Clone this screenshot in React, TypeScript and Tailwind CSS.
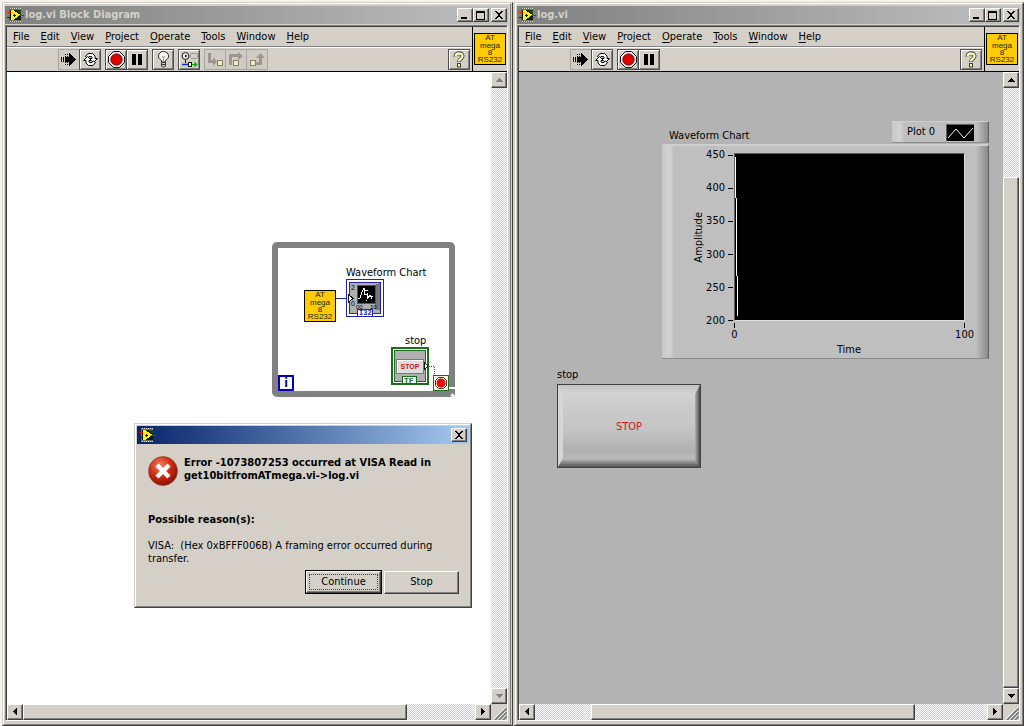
import React from "react";

const raised =
  "border border-t-white border-l-white border-r-[#404040] border-b-[#404040] shadow-[inset_-1px_-1px_0_#808080] bg-[#d4d0c8]";

function LabViewIcon() {
  return (
    <svg width="17" height="14" viewBox="0 0 17 14" shapeRendering="crispEdges" className="shrink-0">
      <rect x="2" y="0" width="12" height="14" fill="#66705c" />
      <rect x="3" y="2" width="11" height="10" fill="#0c1c08" />
      <path d="M3 .5H14M3 13.500H14" stroke="#e0e0d0" strokeDasharray="1 1" />
      <path d="M9 2H14V7Z" fill="#1c4a14" />
      <path d="M4 2H6L13 6.500V7.500L6 12H4Z" fill="#fff200" />
      <path d="M6 7H9M7.500 5.500V8.500" stroke="#202000" />
      <path d="M0 4.500H4M12 7.500H17" stroke="#f00" />
      <path d="M0 9.500H4" stroke="#00f" />
    </svg>
  );
}

function CaptionButtons() {
  const base = `h-[14px] w-4 grid place-items-center ${raised}`;
  return (
    <div className="flex items-center">
      <button type="button" aria-label="Minimize" className={base}>
        <svg width="12" height="10" shapeRendering="crispEdges"><rect x="2" y="7" width="6" height="2" /></svg>
      </button>
      <button type="button" aria-label="Maximize" className={base}>
        <svg width="12" height="10" shapeRendering="crispEdges">
          <path d="M1 1H10V10H1Z M2 3V9H9V3Z" fillRule="evenodd" />
        </svg>
      </button>
      <CloseButton className="ml-[2px]" />
    </div>
  );
}

function CloseButton({ className = "" }: { className?: string }) {
  return (
    <button type="button" aria-label="Close" className={`h-[14px] w-4 grid place-items-center ${raised} ${className}`}>
      <svg width="12" height="10" shapeRendering="crispEdges">
        <path d="M2 1h2v1h1v1h2v-1h1v-1h2v1h-1v1h-1v1h-1v2h1v1h1v1h1v1h-2v-1h-1v-1h-2v1h-1v1h-2v-1h1v-1h1v-1h1v-2h-1v-1h-1v-1h-1z" />
      </svg>
    </button>
  );
}

const menus = ["File", "Edit", "View", "Project", "Operate", "Tools", "Window", "Help"];

function MenuBar() {
  return (
    <nav className="flex h-[20px] items-center gap-[11px] border-b border-[#808080] pl-[6px]">
      {menus.map((m) => (
        <button type="button" key={m} className="leading-[14px]">
          <span className="underline underline-offset-2">{m[0]}</span>
          {m.slice(1)}
        </button>
      ))}
    </nav>
  );
}

function ToolButton({
  label,
  flat,
  children,
  className = "",
}: {
  label: string;
  flat?: boolean;
  children: React.ReactNode;
  className?: string;
}) {
  const look = flat
    ? "border border-[#a9a69f] bg-[#d0ccc4]"
    : "border border-[#505050] bg-[#d4d0c8] shadow-[inset_1px_1px_0_#fff,inset_-1px_-1px_0_#808080]";
  return (
    <button type="button" aria-label={label} className={`grid h-[21px] w-[22px] place-items-center ${look} ${className}`}>
      {children}
    </button>
  );
}

function RunIcon() {
  return (
    <svg width="16" height="13" shapeRendering="crispEdges">
      <path d="M0 4h1v5h-1zM2 4h1v5h-1zM4 4h4v5h-4zM8 0h1v1h1v1h1v1h1v1h1v1h1v1h1v1h-1v1h-1v1h-1v1h-1v1h-1v1h-1v1h-1z" />
      <path d="M4.500 1V4M6.500 1V4M4.500 9V12M6.500 9V12" stroke="#000" strokeDasharray="1 1" />
    </svg>
  );
}

function RunLoopIcon() {
  return (
    <svg width="17" height="15" viewBox="0 0 17 15">
      <path d="M3.500 4.500L6 1.500H10.500L13 4V6.500H15.500L11.500 10.500L7.500 6.500H10V5L9 4.500H7L5.500 6Z" fill="#fff" stroke="#000" />
      <path d="M13.500 10.500L11 13.500H6.500L4 11V8.500H1.500L5.500 4.500L9.500 8.500H7V10L8 10.500H10L11.500 9Z" fill="#fff" stroke="#000" />
    </svg>
  );
}

function AbortIcon() {
  return (
    <svg width="17" height="17" viewBox="0 0 17 17">
      <path d="M5.500 .5H11.500L16.500 5.500V11.500L11.500 16.500H5.500L.5 11.500V5.500Z" fill="#f4e8e4" stroke="#111" />
      <circle cx="8.500" cy="8.500" r="5.600" fill="#e60000" stroke="#600" />
    </svg>
  );
}

function PauseIcon() {
  return (
    <svg width="12" height="11" shapeRendering="crispEdges">
      <path d="M1 0h4v11h-4zM7 0h4v11h-4z" />
    </svg>
  );
}

function BulbIcon() {
  return (
    <svg width="13" height="17" viewBox="0 0 13 17">
      <path d="M4.500 11V9.500C2 8 1.500 6.500 1.500 5A5 4.500 0 0 1 11.500 5C11.500 6.500 11 8 8.500 9.500V11Z" fill="#fffff0" stroke="#222" />
      <path d="M5 5L6.500 7L8 5M6.500 7V11" fill="none" stroke="#888" />
      <path d="M4.500 11.500H8.500V15L7.500 16H5.500L4.500 15Z" fill="#e4d080" stroke="#333" />
      <path d="M4.500 13.500H8.500" stroke="#333" />
    </svg>
  );
}

function RetainIcon() {
  return (
    <svg width="17" height="16" viewBox="0 0 17 16">
      <circle cx="4.500" cy="4" r="3.400" fill="#fff" stroke="#111" />
      <path d="M4 2.500V5.500L6.500 4Z" />
      <path d="M4.500 7.500V11" stroke="#111" />
      <rect x="9.500" y="1.500" width="7" height="5" rx="1" fill="#d4d0c8" stroke="#999" />
      <path d="M1 12.500H7" stroke="#1030d0" strokeWidth="1.500" />
      <rect x="7.500" y="10.500" width="3" height="4" fill="#fff" stroke="#111" />
      <path d="M11 12.500H14" stroke="#0a0" />
      <path d="M13.500 9.500V15.500L16.500 12.500Z" fill="#0a0" />
    </svg>
  );
}

function StepIcon({ kind }: { kind: "into" | "over" | "out" }) {
  const arrow = {
    into: "M1 1H4V8H6V5L10 9.500L6 14V11H1Z",
    over: "M1 13V2H10V0L15 4L10 8V5H4V13Z",
    out: "M7 13V10H10V6H7L11.500 1L16 6H13V13Z",
  }[kind];
  const x = { into: 10.5, over: 5.500, out: 1.500 }[kind];
  return (
    <svg width="17" height="15" viewBox="0 0 17 15">
      <path d={arrow} fill="#9c9890" />
      <rect x={x} y="8.500" width="5" height="5" fill="#eeecc0" stroke="#808078" />
    </svg>
  );
}

function HelpIcon() {
  return (
    <svg width="14" height="17" viewBox="0 0 14 17">
      <path d="M3.500 5.500C3 1.500 10.500 1 10.500 5C10.500 8 7 7.500 7 11" fill="none" stroke="#333" strokeWidth="4" />
      <rect x="5" y="12" width="4" height="4.500" rx="1" fill="#333" />
      <path d="M3.500 5.500C3.500 1.500 10.500 1.500 10.500 5C10.500 8 7 7.500 7 10.500" fill="none" stroke="#fdf9b8" strokeWidth="2.400" />
      <rect x="6" y="13" width="2" height="2.500" fill="#fdf9b8" />
    </svg>
  );
}

function ViIcon() {
  return (
    <div className="flex h-8 w-8 flex-col items-center justify-between overflow-hidden border border-black bg-[#ffcc00] font-['Liberation_Sans',sans-serif] text-[8px] leading-[7px] text-[#222]">
      <span className="leading-[8px]">AT</span>
      <span>mega</span>
      <span>8</span>
      <span className="leading-[8px]">RS232</span>
    </div>
  );
}

function ToolBar({ diagram }: { diagram?: boolean }) {
  return (
    <div className="flex h-[24px] items-center border-t border-white pr-[2px] pl-[51px]">
      <div className="flex flex-1 gap-1">
        <div className="flex">
          <ToolButton label="Run" flat><RunIcon /></ToolButton>
          <ToolButton label="Run continuously" className="-ml-px"><RunLoopIcon /></ToolButton>
        </div>
        <div className="flex">
          <ToolButton label="Abort"><AbortIcon /></ToolButton>
          <ToolButton label="Pause" className="-ml-px"><PauseIcon /></ToolButton>
        </div>
        {diagram && (
          <>
            <ToolButton label="Highlight execution"><BulbIcon /></ToolButton>
            <ToolButton label="Retain wire values"><RetainIcon /></ToolButton>
            <div className="flex">
              <ToolButton label="Step into" flat><StepIcon kind="into" /></ToolButton>
              <ToolButton label="Step over" flat className="-ml-px"><StepIcon kind="over" /></ToolButton>
              <ToolButton label="Step out" flat className="-ml-px"><StepIcon kind="out" /></ToolButton>
            </div>
          </>
        )}
      </div>
      <ToolButton label="Context help"><HelpIcon /></ToolButton>
    </div>
  );
}

const track =
  "bg-[repeating-conic-gradient(#ffffff_0_25%,#d4d0c8_0_50%)] bg-[length:2px_2px]";

const arrows = {
  up: "M7 5h1v1h1v1h1v1h1v1h-7v-1h1v-1h1v-1h1z",
  down: "M4 5h7v1h-1v1h-1v1h-1v1h-1v-1h-1v-1h-1v-1h-1z",
  left: "M8 3h1v7h-1v-1h-1v-1h-1v-1h-1v-1h1v-1h1v-1h1z",
  right: "M5 3h1v1h1v1h1v1h1v1h-1v1h-1v1h-1v1h-1z",
};

function ScrollArrow({ dir, disabled }: { dir: keyof typeof arrows; disabled?: boolean }) {
  return (
    <button type="button" aria-label={`Scroll ${dir}`} disabled={disabled} className={`h-4 w-4 shrink-0 ${raised}`}>
      <svg width="14" height="14" shapeRendering="crispEdges">
        <path d={arrows[dir]} fill={disabled ? "#808080" : "#000"} />
      </svg>
    </button>
  );
}

function LabWindow({
  title,
  diagram,
  canvasClass,
  vertical,
  horizontal,
  className = "",
  children,
}: {
  title: string;
  diagram?: boolean;
  canvasClass: string;
  vertical: React.ReactNode;
  horizontal: React.ReactNode;
  className?: string;
  children: React.ReactNode;
}) {
  return (
    <section className={`flex min-w-0 flex-1 flex-col border-t border-r border-b border-t-[#d4d0c8] border-l-[#d4d0c8] border-r-[#404040] border-b-[#404040] bg-[#d4d0c8] ${className}`}>
      <div className="flex min-h-0 flex-1 flex-col border border-t-white border-r-[#808080] border-b-[#808080] border-l-white pt-[2px] pr-[2px] pb-[3px] pl-px">
        <header className="flex h-[18px] shrink-0 items-center gap-px bg-linear-to-r from-[#808080] to-[#c0c0c0] pr-px pl-[2px]">
          <LabViewIcon />
          <h1 className="flex-1 text-[11px] font-bold text-[#d4d0c8]">{title}</h1>
          <CaptionButtons />
        </header>
        <div className="mt-px flex min-h-0 flex-1 flex-col border border-t-[#808080] border-r-white border-b-white border-l-[#808080]">
          <div className="flex min-h-0 flex-1 flex-col border-t border-l border-[#404040]">
            <div className="flex shrink-0 border-b border-black">
              <div className="min-w-0 flex-1">
                <MenuBar />
                <ToolBar diagram={diagram} />
              </div>
              <div className="border-l border-black pt-[6px] pr-px pl-px">
                <ViIcon />
              </div>
            </div>
            <div className="flex min-h-0 flex-1">
              <main className={`relative min-w-0 flex-1 overflow-hidden ${canvasClass}`}>{children}</main>
              <div className={`flex w-4 shrink-0 flex-col ${track}`}>{vertical}</div>
            </div>
            <div className="flex h-4 shrink-0">
              <div className={`flex min-w-0 flex-1 ${track}`}>{horizontal}</div>
              <svg width="16" height="16" className="shrink-0">
                <path d="M4 16L16 4M8 16L16 8M12 16L16 12" stroke="#808080" strokeWidth="2" />
                <path d="M3 15L15 3M7 15L15 7M11 15L15 11" stroke="#fff" />
              </svg>
            </div>
          </div>
        </div>
      </div>
    </section>
  );
}

function ChartTerminal() {
  return (
    <svg width="38" height="38" viewBox="0 0 38 38" shapeRendering="crispEdges">
      <rect x=".5" y=".5" width="37" height="37" fill="#fff" stroke="#2222b0" />
      <rect x="3.500" y="3.500" width="31" height="31" fill="#b0b0b0" stroke="#2222b0" />
      <path d="M34 4V31H29V6Z" fill="#787878" />
      <rect x="11" y="6" width="18" height="18" fill="#000" stroke="#555" />
      <path d="M12 19H14L16 13L18 9V16L21 15V20L24 16L26 20M19 11H22M22 17H27" fill="none" stroke="#fff" />
      <text x="5" y="11" fontSize="7" fontFamily="Liberation Sans">2</text>
      <text x="5" y="27" fontSize="7" fontFamily="Liberation Sans">0</text>
      <text x="10" y="30" fontSize="6" fontFamily="Liberation Sans">00</text>
      <text x="24" y="30" fontSize="6" fontFamily="Liberation Sans">10</text>
      <path d="M2 15L7 19.500L2 24Z" fill="#fff" stroke="#111" />
      <path d="M11 30H27V37H11Z" fill="#fff" />
      <path d="M11.500 37V30.500H26.500V37" fill="none" stroke="#2222b0" />
      <text x="13" y="36" fontSize="7" fontWeight="bold" fill="#2222b0" fontFamily="Liberation Mono">I32</text>
    </svg>
  );
}

function StopTerminal() {
  return (
    <svg width="38" height="38" viewBox="0 0 38 38" shapeRendering="crispEdges">
      <rect x="1" y="1" width="36" height="36" fill="#fff" stroke="#1c6e1c" strokeWidth="2" />
      <rect x="3.500" y="3.500" width="31" height="31" fill="#b0b0b0" stroke="#1c6e1c" />
      <rect x="5.500" y="12.500" width="27" height="14" fill="#ddd" stroke="#777" />
      <path d="M6 13.500H32M6.500 13V26" stroke="#fff" />
      <text x="19" y="22" fontSize="7" textAnchor="middle" fontWeight="bold" fill="#c81818" fontFamily="Liberation Sans">STOP</text>
      <path d="M33 15L37 19L33 23Z" fill="#fff" stroke="#111" />
      <rect x="11.500" y="29.500" width="14" height="7" fill="#fff" stroke="#1c6e1c" />
      <text x="13" y="36" fontSize="8" fontWeight="bold" fill="#1c6e1c" fontFamily="Liberation Mono">TF</text>
    </svg>
  );
}

function BlockDiagram() {
  return (
    <>
      <svg width="184" height="156" className="absolute top-[170px] left-[265px]">
        <rect x="3" y="3" width="177" height="149" rx="2" fill="none" stroke="#808080" strokeWidth="6" />
        <rect x="176" y="145" width="8" height="2" fill="#fff" />
        <path d="M177 147h6v7h-6z" fill="#808080" />
        <path d="M178 154L180.500 151L183 154Z" fill="#fff" />
        <path d="M64 56.500H75" stroke="#2222b0" />
        <path d="M157 124.500H162.500V133" fill="none" stroke="#1c6e1c" strokeDasharray="1 1" shapeRendering="crispEdges" />
      </svg>
      <div className="absolute top-[218px] left-[297px]"><ViIcon /></div>
      <div className="absolute top-[194px] left-[339px] leading-[14px] whitespace-nowrap">Waveform Chart</div>
      <div className="absolute top-[207px] left-[339px]"><ChartTerminal /></div>
      <div className="absolute top-[262px] left-[398px] leading-[14px]">stop</div>
      <div className="absolute top-[275px] left-[384px]"><StopTerminal /></div>
      <div className="absolute top-[303px] left-[271px] grid h-4 w-4 place-items-center border-2 border-[#0000c0] bg-[#fffff0] text-[12px] leading-[12px] font-bold text-[#0000a0]">
        i
      </div>
      <svg width="16" height="16" className="absolute top-[303px] left-[426px]">
        <rect x=".5" y=".5" width="15" height="15" fill="#fff8dc" stroke="#1c6e1c" />
        <path d="M5.500 2.500H10.500L13.500 5.500V10.500L10.500 13.500H5.500L2.500 10.500V5.500Z" fill="#fff" stroke="#333" />
        <circle cx="8" cy="8" r="4.500" fill="#f00" />
      </svg>
    </>
  );
}

function ErrorDialog() {
  return (
    <div
      role="dialog"
      aria-labelledby="error-title"
      className="absolute top-[351px] left-[127px] w-[338px] border border-t-[#d4d0c8] border-r-[#404040] border-b-[#404040] border-l-[#d4d0c8] bg-[#d4d0c8]"
    >
      <div className="border border-t-white border-r-[#808080] border-b-[#808080] border-l-white p-px">
        <div className="flex h-[18px] items-center justify-between bg-linear-to-r from-[#0a246a] to-[#a6caf0] pr-[2px] pl-[2px]">
          <LabViewIcon />
          <CloseButton />
        </div>
        <div className="pt-3 pr-[10px] pb-[11px] pl-[11px]">
          <div className="flex gap-[6px]">
            <svg width="30" height="30" viewBox="0 0 30 30" className="shrink-0">
              <defs>
                <radialGradient id="err" cx="40%" cy="30%" r="75%">
                  <stop offset="0" stopColor="#f08060" />
                  <stop offset=".5" stopColor="#d02c10" />
                  <stop offset="1" stopColor="#801004" />
                </radialGradient>
              </defs>
              <circle cx="15" cy="15" r="14.500" fill="url(#err)" stroke="#8a4030" strokeWidth=".6" />
              <path d="M9 9L21 21M21 9L9 21" stroke="#fff" strokeWidth="4.500" />
            </svg>
            <p id="error-title" className="font-bold leading-[13px] whitespace-nowrap">
              Error -1073807253 occurred at VISA Read in
              <br />
              get10bitfromATmega.vi-&gt;log.vi
            </p>
          </div>
          <p className="mt-[27px] font-bold leading-[13px]">Possible reason(s):</p>
          <p className="mt-[13px] leading-[13px] whitespace-pre">{"VISA:  (Hex 0xBFFF006B) A framing error occurred during\ntransfer."}</p>
          <div className="mt-[5px] flex items-center justify-end gap-[2px]">
            <button type="button" className="h-6 w-[77px] border border-black">
              <span className={`flex h-full items-center justify-center p-[2px] ${raised}`}>
                <span className="flex h-full w-full items-center justify-center border border-dotted border-[#404040]">Continue</span>
              </span>
            </button>
            <button type="button" className={`h-[23px] w-[75px] ${raised}`}>Stop</button>
          </div>
        </div>
      </div>
    </div>
  );
}

const yTicks = [450, 400, 350, 300, 250, 200];

function FrontPanel() {
  return (
    <>
      <div className="absolute top-[57px] left-[150px] leading-[14px] whitespace-nowrap">Waveform Chart</div>
      <div className="absolute top-[49px] left-[373px] flex h-[22px] w-[97px] items-center justify-between border-t border-r border-b border-t-[#cfcfcf] border-r-[#606060] border-b-[#8c8c8c] bg-[linear-gradient(to_right,#c8c8c8_0,#d2d2d2_8px,#bfbfbf_12px,#bfbfbf_85px,#8a8a8a_96px)] pr-[14px] pl-[15px]">
        <span>Plot 0</span>
        <svg width="28" height="17" className="border-t border-l border-[#606060] bg-black">
          <path d="M1 13L9 4L17 13L26 3" fill="none" stroke="#fff" />
        </svg>
      </div>
      <div className="absolute top-[72px] left-[143px] w-[327px] border-t-2 border-r border-b border-t-[#cfcfcf] border-r-[#606060] border-b-[#8c8c8c] bg-[linear-gradient(to_right,#c8c8c8_0,#d2d2d2_8px,#bfbfbf_12px,#bfbfbf_314px,#8a8a8a_326px)] pr-[23px] pb-px pl-[30px]">
        <div className="flex">
          <div className="flex items-center">
            <span className="rotate-180 leading-[14px] [writing-mode:vertical-rl]">Amplitude</span>
          </div>
          <ul className="mr-px flex w-[27px] flex-1 flex-col justify-between pt-[2px]">
            {yTicks.map((t) => (
              <li key={t} className="flex items-center justify-end gap-[3px] leading-[14px]">
                {t}
                <span className="h-px w-[5px] bg-black" />
              </li>
            ))}
          </ul>
          <div className="pt-[7px] pb-[7px]">
            <svg width="231" height="168" className="border-t border-r border-b border-l border-t-[#606060] border-r-[#dcdcdc] border-b-[#dcdcdc] border-l-[#606060] bg-black" shapeRendering="crispEdges">
              <path d="M.5 3V44M1.500 44V122M2.500 122V162" stroke="#fff" />
            </svg>
          </div>
        </div>
        <div className="-mt-[5px] ml-[39px] flex justify-between leading-[14px]">
          <span className="flex w-[7px] flex-col items-center"><span className="h-[5px] w-px bg-black" />0</span>
          <span className="-mr-[9px] flex flex-col items-center"><span className="h-[5px] w-px bg-black" />100</span>
        </div>
        <div className="mt-px ml-[41px] text-center leading-[14px]">Time</div>
      </div>
      <div className="absolute top-[296px] left-[38px] leading-[14px]">stop</div>
      <button
        type="button"
        className="absolute top-[312px] left-[38px] h-[84px] w-[144px] border border-[#404040] bg-[linear-gradient(to_bottom,#c4c4c4_0,#d2d2d2_8px,#cccccc_20px,#c4c4c4_45px,#b0b0b0_66px,#bababa_74px,#909090_77px,#505050_100%)] pt-[2px] text-[#d01818]"
      >
        <svg width="142" height="82" viewBox="0 0 142 82" className="absolute inset-0">
          <defs>
            <linearGradient id="edge" x1="0" x2="1">
              <stop offset="0" stopColor="#b0b0b0" />
              <stop offset="1" stopColor="#4a4a4a" />
            </linearGradient>
          </defs>
          <path d="M0 0L5 9V73L0 82Z" fill="#d6d6d6" />
          <path d="M142 0L137 9V75L142 82Z" fill="url(#edge)" />
        </svg>
        STOP
      </button>
    </>
  );
}

export default function App() {
  return (
    <div className="flex h-screen min-h-[640px] bg-[#f4f2ea] pt-[2px] pl-[2px] font-['DejaVu_Sans_Condensed','Noto_Sans',sans-serif] text-[11px] text-black">
      <LabWindow
        title="log.vi Block Diagram"
        diagram
        className="border-l pr-px"
        canvasClass="bg-white"
        vertical={
          <>
            <ScrollArrow dir="up" disabled />
            <div className="flex-1" />
            <ScrollArrow dir="down" disabled />
          </>
        }
        horizontal={
          <>
            <ScrollArrow dir="left" />
            <div className={`flex-[385] ${raised}`} />
            <div className="flex-[68]" />
            <ScrollArrow dir="right" />
          </>
        }
      >
        <BlockDiagram />
        <ErrorDialog />
      </LabWindow>
      <LabWindow
        title="log.vi"
        className="border-l-2"
        canvasClass="bg-[#b3b3b3]"
        vertical={
          <>
            <ScrollArrow dir="up" />
            <div className="flex-[89]" />
            <div className={`flex-[511] ${raised}`} />
            <ScrollArrow dir="down" />
          </>
        }
        horizontal={
          <>
            <ScrollArrow dir="left" />
            <div className="flex-[56]" />
            <div className={`flex-[324] ${raised}`} />
            <div className="flex-[72]" />
            <ScrollArrow dir="right" />
          </>
        }
      >
        <FrontPanel />
      </LabWindow>
    </div>
  );
}
